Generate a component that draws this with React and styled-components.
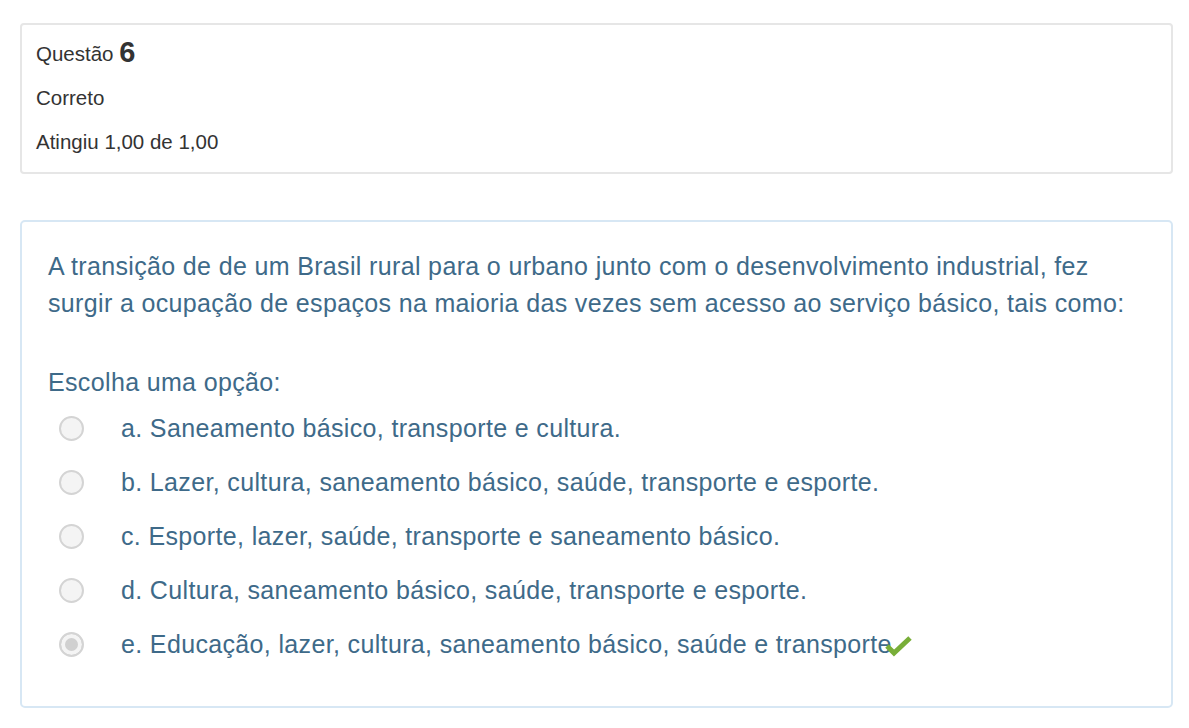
import React from "react";
import styled, { createGlobalStyle } from "styled-components";

const GlobalStyle = createGlobalStyle`
  body {
    margin: 0;
    background: #fff;
    font-family: "Liberation Sans", Arial, sans-serif;
  }
`;

const options = [
  { letter: "a", text: "Saneamento básico, transporte e cultura." },
  { letter: "b", text: "Lazer, cultura, saneamento básico, saúde, transporte e esporte." },
  { letter: "c", text: "Esporte, lazer, saúde, transporte e saneamento básico." },
  { letter: "d", text: "Cultura, saneamento básico, saúde, transporte e esporte." },
  { letter: "e", text: "Educação, lazer, cultura, saneamento básico, saúde e transporte", checked: true },
];

const Check = () => (
  <svg width="28" height="24" viewBox="0 0 28 24">
    <path d="M2 13 L9 20 L25 5" fill="none" stroke="#78ae38" strokeWidth="5" strokeLinejoin="miter" />
  </svg>
);

const App = () => {
  return (
    <Page>
      <GlobalStyle />
      <InfoBox>
        <QNumber>
          Questão <strong>6</strong>
        </QNumber>
        <InfoLine>Correto</InfoLine>
        <InfoLine>Atingiu 1,00 de 1,00</InfoLine>
      </InfoBox>
      <QuestionBox>
        <QText>
          A transição de de um Brasil rural para o urbano junto com o desenvolvimento industrial, fez
          surgir a ocupação de espaços na maioria das vezes sem acesso ao serviço básico, tais como:
        </QText>
        <Prompt>Escolha uma opção:</Prompt>
        <Answers>
          {options.map((o) => (
            <Option key={o.letter}>
              <Radio checked={o.checked} />
              <Label>
                {o.letter}. {o.text}
                {o.checked && (
                  <Mark>
                    <Check />
                  </Mark>
                )}
              </Label>
            </Option>
          ))}
        </Answers>
      </QuestionBox>
    </Page>
  );
};

const Page = styled.div`
  padding: 23px 16px 20px 20px;
  display: flex;
  flex-direction: column;
  gap: 46px;
`;

const InfoBox = styled.div`
  border: 2px solid #e6e6e6;
  border-radius: 4px;
  padding: 8px 14px 15px;
  color: #333;
  font-size: 20.5px;
  height: 151px;
  box-sizing: border-box;
`;

const QNumber = styled.div`
  line-height: 38px;

  strong {
    font-size: 29px;
    font-weight: bold;
    vertical-align: -1px;
  }
`;

const InfoLine = styled.div`
  margin-top: 6px;
  line-height: 38px;
`;

const QuestionBox = styled.div`
  border: 2px solid #d7e7f4;
  border-radius: 5px;
  padding: 26px 26px 46px;
  color: #3e6a89;
  font-size: 25px;
  letter-spacing: 0.35px;
`;

const QText = styled.div`
  line-height: 37px;
`;

const Prompt = styled.div`
  margin-top: 44px;
  line-height: 32px;
`;

const Answers = styled.div`
  display: flex;
  flex-direction: column;
  gap: 22px;
  margin-top: 14px;
`;

const Option = styled.div`
  display: flex;
  align-items: center;
  height: 32px;
`;

const Radio = styled.span`
  width: 21px;
  height: 21px;
  border-radius: 50%;
  border: 2px solid #d4d4d4;
  background: ${(p) => (p.checked ? "#d0d0d0" : "#f4f4f4")};
  box-shadow: ${(p) => (p.checked ? "inset 0 0 0 4px #f4f4f4" : "none")};
  margin-left: 11px;
  margin-right: 37px;
  flex-shrink: 0;
`;

const Label = styled.span`
  display: flex;
  align-items: center;
`;

const Mark = styled.span`
  display: inline-flex;
  margin-left: -7px;
  margin-top: 2px;
`;

export default App;
